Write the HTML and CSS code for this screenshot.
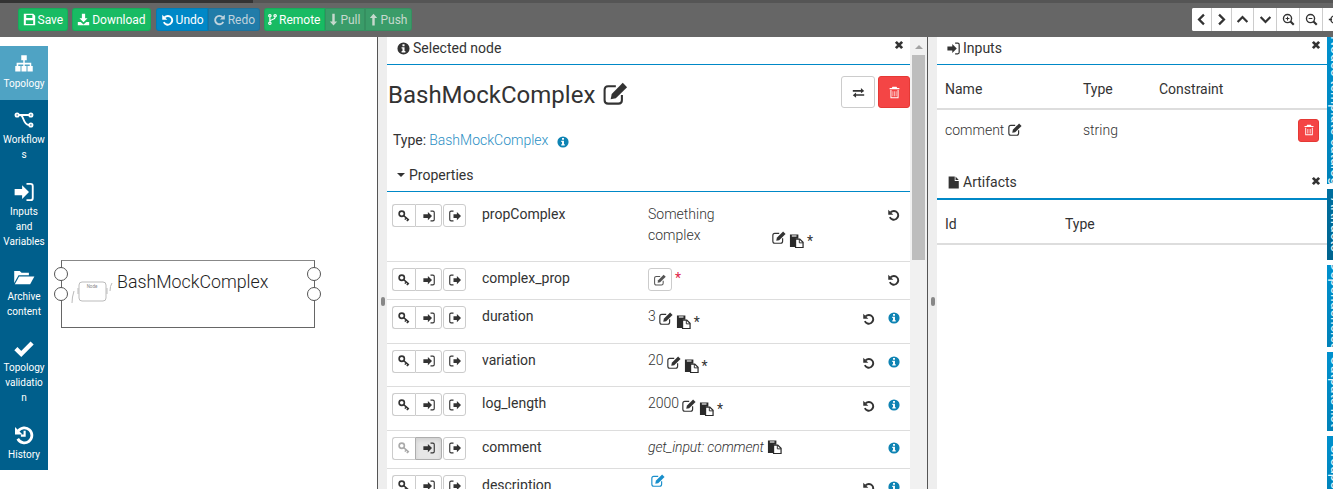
FILE: index.html
```html
<!DOCTYPE html>
<html lang="en">
<head>
  <meta charset="UTF-8">
  <title>Topology editor</title>
  <link rel="stylesheet" href="styles.css">
</head>
<body>
  <svg class="icon-defs" width="0" height="0">
    <defs>
      <symbol id="i-save" viewBox="0 0 16 16"><path fill-rule="evenodd" d="M1 1h11.5L15 3.5V15H1zM4 2.500V6h7.500V2.500zM3.500 9v4.500h9V9z"/></symbol>
      <symbol id="i-download" viewBox="0 0 16 16"><path d="M6 1h4v5.500h3l-5 5-5-5h3zM1 11h3.500L8 14l3.500-3H15v4H1z"/></symbol>
      <symbol id="i-undo" viewBox="0 0 15.500 15.500"><path d="M4.300 5.200A5.200 5.200 0 1 1 3.400 10.800" fill="none" stroke="currentColor" stroke-width="2.300"/><path d="M1.500 2v6h6z"/></symbol>
      <symbol id="i-redo" viewBox="0 0 16 16"><path d="M11.700 5.200A5.200 5.200 0 1 0 12.600 10.800" fill="none" stroke="currentColor" stroke-width="2.300"/><path d="M14.500 2v6h-6z"/></symbol>
      <symbol id="i-fork" viewBox="2 0 12 16"><g fill="none" stroke="currentColor" stroke-width="1.600"><circle cx="4.500" cy="3" r="1.600"/><circle cx="4.500" cy="13" r="1.600"/><circle cx="11.500" cy="3" r="1.600"/><path d="M4.500 5v6M11.500 5c0 4-7 2-7 6"/></g></symbol>
      <symbol id="i-down" viewBox="3 0 10 16"><path d="M6.500 1h3v9.500h3L8 15.500 3.500 10.500h3z"/></symbol>
      <symbol id="i-up" viewBox="3 0 10 16"><path d="M6.500 15.500h3V6h3L8 1 3.500 6h3z"/></symbol>
      <symbol id="i-left" viewBox="0 0 16 16"><path d="M11 2L5 8l6 6" fill="none" stroke="currentColor" stroke-width="2.800"/></symbol>
      <symbol id="i-right" viewBox="0 0 16 16"><path d="M5 2l6 6-6 6" fill="none" stroke="currentColor" stroke-width="2.800"/></symbol>
      <symbol id="i-chev-up" viewBox="0 0 16 16"><path d="M2 11l6-6 6 6" fill="none" stroke="currentColor" stroke-width="2.800"/></symbol>
      <symbol id="i-chev-down" viewBox="0 0 16 16"><path d="M2 5l6 6 6-6" fill="none" stroke="currentColor" stroke-width="2.800"/></symbol>
      <symbol id="i-zoom-in" viewBox="0 0 16 16"><g fill="none" stroke="currentColor"><circle cx="6.800" cy="6.800" r="5" stroke-width="1.700"/><path d="M10.500 10.500l4 4" stroke-width="2.600"/><path d="M4.500 6.800h4.600M6.800 4.500v4.600" stroke-width="1.300"/></g></symbol>
      <symbol id="i-zoom-out" viewBox="0 0 16 16"><g fill="none" stroke="currentColor"><circle cx="6.800" cy="6.800" r="5" stroke-width="1.700"/><path d="M10.500 10.500l4 4" stroke-width="2.600"/><path d="M4.500 6.800h4.600" stroke-width="1.300"/></g></symbol>
      <symbol id="i-target" viewBox="0 0 16 16"><g fill="none" stroke="currentColor"><circle cx="8" cy="8" r="4.500" stroke-width="1.600"/><path d="M8 1v4M8 11v4M1 8h4M11 8h4" stroke-width="1.600"/></g></symbol>
      <symbol id="i-sitemap" viewBox="0 0 16 16"><path d="M5.800 1h4.400v4H8.600v2h5.200v2.500H15V14h-4.200V9.500H12.600V8.300H8.600v1.200H10V14H6V9.500h1.400V8.300H3.400v1.200h1.800V14H1V9.500h1.100V7h5.300V5H5.800z"/></symbol>
      <symbol id="i-flow" viewBox="0 0 16 16"><g fill="none" stroke="currentColor" stroke-width="1.500"><circle cx="2.500" cy="4" r="1.300"/><circle cx="13.500" cy="4" r="1.300"/><circle cx="13.500" cy="12" r="1.300"/><path d="M4 4h8M5 4c3 0 2 8 7 8"/></g></symbol>
      <symbol id="i-signin" viewBox="0 0 16 16"><path d="M0.500 5.500h6V2.500L12 8l-5.500 5.500v-3h-6z"/><path d="M10 1.500h3.200q1.800 0 1.800 1.800v9.400q0 1.800-1.800 1.800H10" fill="none" stroke="currentColor" stroke-width="1.500"/></symbol>
      <symbol id="i-signout" viewBox="0 0 16 16"><path d="M6 5.500h4.500V2.500L16 8l-5.500 5.500v-3H6z"/><path d="M6 1.500H2.800Q1 1.500 1 3.300v9.400q0 1.800 1.800 1.800H6" fill="none" stroke="currentColor" stroke-width="1.500"/></symbol>
      <symbol id="i-folder" viewBox="0 0 18 16"><path d="M1 13V3h4.500l1.500 1.500h6V6.500H4.500z"/><path d="M5 7.500h12.500L14 14H1.500z"/></symbol>
      <symbol id="i-check" viewBox="0 0 16 16"><path d="M1.500 8.500l4.300 4.300L14.500 4" fill="none" stroke="currentColor" stroke-width="3.500"/></symbol>
      <symbol id="i-history" viewBox="0 0 16 16"><path d="M3.400 4.800A6 6 0 1 1 3 11" fill="none" stroke="currentColor" stroke-width="2.200"/><path d="M0.800 1.500v6h6z"/><path d="M8.500 4.500v4h-3" fill="none" stroke="currentColor" stroke-width="1.700"/></symbol>
      <symbol id="i-info" viewBox="0.500 0.500 15 15"><path fill-rule="evenodd" d="M8 1a7 7 0 1 1 0 14A7 7 0 0 1 8 1zM6.800 3v2.300h2.400V3zM5.800 6.500v1.400h1v3H5.800v1.600h4.400v-1.600h-1V6.500z"/></symbol>
      <symbol id="i-edit" viewBox="1.300 1.500 14 13.300"><path d="M12 9v3q0 2-2 2H4q-2 0-2-2V6q0-2 2-2h4.500" fill="none" stroke="currentColor" stroke-width="1.200"/><path d="M5.500 11.500l.6-3L12.500 2l2.500 2.500-6.500 6.400z"/></symbol>
      <symbol id="i-close" viewBox="0 0 16 16"><path d="M3 3l10 10M13 3L3 13" fill="none" stroke="currentColor" stroke-width="4.500"/></symbol>
      <symbol id="i-exchange" viewBox="0 0 16 16"><path d="M1 4.500h10V2l4 3.500-4 3V6.500H1zM15 9.500H5V7.500l-4 3.500 4 3v-2.500h10z" transform="translate(0 .5)"/></symbol>
      <symbol id="i-trash" viewBox="0 0 16 16"><path fill-rule="evenodd" d="M5.500 1h5l.8 1.500H14V4H2V2.500h2.700zM3 5h10v10H3zM4.200 5v8.800h7.600V5z"/><path opacity=".7" d="M5.500 6.500h1v6h-1zM7.500 6.500h1v6h-1zM9.500 6.500h1v6h-1z"/></symbol>
      <symbol id="i-key" viewBox="0 0 16 16"><g fill="none" stroke="currentColor"><circle cx="5" cy="5" r="3.500" stroke-width="2.200"/><path d="M7.500 7.500l7 6M11 10.500l-1.800 2.300M13.500 12.700l-1.700 2.100" stroke-width="2"/></g></symbol>
      <symbol id="i-paste" viewBox="0 0 16 16"><path d="M1 1.500h9V6H7v9H1z"/><path fill="#fff" stroke="currentColor" stroke-width="1.300" d="M7 6.500h4.500L15 10v5.500H7z"/><path d="M11 6.500V10.500h4" fill="none" stroke="currentColor" stroke-width="1"/><path d="M3 2.600h5v1.200H3z" fill="#fff"/></symbol>
      <symbol id="i-file" viewBox="1.500 0 13 16"><path d="M2 0.500h7.500v5.500h5v9.500H2zM10.500 0.500l4 4.500h-4z"/></symbol>
    </defs>
  </svg>

  <div class="top-strip"><span class="top-strip-dark"></span></div>
  <header class="topbar">
    <div class="tool-group">
      <button class="tool tool-green"><svg class="ic"><use href="#i-save"/></svg>Save</button>
    </div>
    <div class="tool-group">
      <button class="tool tool-green tool-wide"><svg class="ic"><use href="#i-download"/></svg>Download</button>
    </div>
    <div class="tool-group group-undo">
      <button class="tool tool-blue"><svg class="ic"><use href="#i-undo"/></svg>Undo</button>
      <button class="tool tool-blue tool-off"><svg class="ic"><use href="#i-redo"/></svg>Redo</button>
    </div>
    <div class="tool-group">
      <button class="tool tool-green"><svg class="ic ic-narrow"><use href="#i-fork"/></svg>Remote</button>
      <button class="tool tool-green tool-off"><svg class="ic ic-narrow"><use href="#i-down"/></svg>Pull</button>
      <button class="tool tool-green tool-off"><svg class="ic ic-narrow"><use href="#i-up"/></svg>Push</button>
    </div>
    <div class="view-tools">
      <button class="view-btn view-narrow"><svg class="ic"><use href="#i-left"/></svg></button>
      <button class="view-btn view-narrow"><svg class="ic"><use href="#i-right"/></svg></button>
      <button class="view-btn view-mid"><svg class="ic"><use href="#i-chev-up"/></svg></button>
      <button class="view-btn"><svg class="ic"><use href="#i-chev-down"/></svg></button>
      <button class="view-btn"><svg class="ic"><use href="#i-zoom-in"/></svg></button>
      <button class="view-btn"><svg class="ic"><use href="#i-zoom-out"/></svg></button>
      <button class="view-btn"><svg class="ic"><use href="#i-target"/></svg></button>
    </div>
  </header>

  <main class="workspace">
    <nav class="sidenav">
      <a class="nav-item active"><svg class="nav-ic"><use href="#i-sitemap"/></svg>Topology</a>
      <a class="nav-item"><svg class="nav-ic"><use href="#i-flow"/></svg>Workflows</a>
      <a class="nav-item"><svg class="nav-ic"><use href="#i-signin"/></svg>Inputs and Variables</a>
      <a class="nav-item"><svg class="nav-ic"><use href="#i-folder"/></svg>Archive content</a>
      <a class="nav-item"><svg class="nav-ic"><use href="#i-check"/></svg>Topology validation</a>
      <a class="nav-item"><svg class="nav-ic"><use href="#i-history"/></svg>History</a>
    </nav>

    <section class="canvas">
      <div class="node">
        <span class="port port-l1"></span>
        <span class="port port-l2"></span>
        <span class="port port-r1"></span>
        <span class="port port-r2"></span>
        <svg class="node-mark" viewBox="0 0 46 30">
          <g fill="none" stroke="#bbb">
            <rect x="9" y="3" width="27" height="19" rx="3"/>
            <path d="M8 9v6M4 12q-2 6-2 12M37 9v6M42 4q-2 3-2 8"/>
          </g>
          <text x="22" y="9" class="node-mark-text">Node</text>
        </svg>
        <span class="node-name">BashMockComplex</span>
      </div>
    </section>

    <div class="gutter"><span class="gutter-grip"></span></div>

    <section class="node-panel">
      <div class="panel-body">
        <div class="panel-head">
          <svg class="ic"><use href="#i-info"/></svg>Selected node
          <svg class="close"><use href="#i-close"/></svg>
        </div>
        <div class="title-row">
          <h3 class="node-title">BashMockComplex <svg class="title-edit"><use href="#i-edit"/></svg></h3>
          <div class="title-actions">
            <button class="btn-outline"><svg class="ic"><use href="#i-exchange"/></svg></button>
            <button class="btn-danger"><svg class="ic"><use href="#i-trash"/></svg></button>
          </div>
        </div>
        <div class="type-line">Type: <a class="type-link">BashMockComplex</a><svg class="info"><use href="#i-info"/></svg></div>
        <div class="props-head"><span class="caret"></span>Properties</div>

        <div class="prop-row row-first">
          <div class="prop-btns">
            <button class="pb pb-key"><svg><use href="#i-key"/></svg></button><button class="pb pb-in"><svg><use href="#i-signin"/></svg></button><button class="pb pb-out"><svg><use href="#i-signout"/></svg></button>
          </div>
          <div class="prop-name">propComplex</div>
          <div class="prop-value value-wrap">
            <span class="value-text">Something complex</span>
            <span class="value-tail"><svg class="edit"><use href="#i-edit"/></svg><svg class="paste"><use href="#i-paste"/></svg><span class="star">*</span></span>
          </div>
          <div class="prop-actions"><svg class="reset"><use href="#i-undo"/></svg></div>
        </div>

        <div class="prop-row row-short">
          <div class="prop-btns">
            <button class="pb pb-key"><svg><use href="#i-key"/></svg></button><button class="pb pb-in"><svg><use href="#i-signin"/></svg></button><button class="pb pb-out"><svg><use href="#i-signout"/></svg></button>
          </div>
          <div class="prop-name">complex_prop</div>
          <div class="prop-value"><button class="pb pb-edit"><svg><use href="#i-edit"/></svg></button><span class="star star-red">*</span></div>
          <div class="prop-actions"><svg class="reset"><use href="#i-undo"/></svg></div>
        </div>

        <div class="prop-row">
          <div class="prop-btns">
            <button class="pb pb-key"><svg><use href="#i-key"/></svg></button><button class="pb pb-in"><svg><use href="#i-signin"/></svg></button><button class="pb pb-out"><svg><use href="#i-signout"/></svg></button>
          </div>
          <div class="prop-name">duration</div>
          <div class="prop-value">3<svg class="edit"><use href="#i-edit"/></svg><svg class="paste"><use href="#i-paste"/></svg><span class="star">*</span></div>
          <div class="prop-actions"><svg class="reset"><use href="#i-undo"/></svg><svg class="info"><use href="#i-info"/></svg></div>
        </div>

        <div class="prop-row">
          <div class="prop-btns">
            <button class="pb pb-key"><svg><use href="#i-key"/></svg></button><button class="pb pb-in"><svg><use href="#i-signin"/></svg></button><button class="pb pb-out"><svg><use href="#i-signout"/></svg></button>
          </div>
          <div class="prop-name">variation</div>
          <div class="prop-value">20<svg class="edit"><use href="#i-edit"/></svg><svg class="paste"><use href="#i-paste"/></svg><span class="star">*</span></div>
          <div class="prop-actions"><svg class="reset"><use href="#i-undo"/></svg><svg class="info"><use href="#i-info"/></svg></div>
        </div>

        <div class="prop-row">
          <div class="prop-btns">
            <button class="pb pb-key"><svg><use href="#i-key"/></svg></button><button class="pb pb-in"><svg><use href="#i-signin"/></svg></button><button class="pb pb-out"><svg><use href="#i-signout"/></svg></button>
          </div>
          <div class="prop-name">log_length</div>
          <div class="prop-value">2000<svg class="edit"><use href="#i-edit"/></svg><svg class="paste"><use href="#i-paste"/></svg><span class="star">*</span></div>
          <div class="prop-actions"><svg class="reset"><use href="#i-undo"/></svg><svg class="info"><use href="#i-info"/></svg></div>
        </div>

        <div class="prop-row row-short">
          <div class="prop-btns">
            <button class="pb pb-key pb-muted"><svg><use href="#i-key"/></svg></button><button class="pb pb-in pb-on"><svg><use href="#i-signin"/></svg></button><button class="pb pb-out"><svg><use href="#i-signout"/></svg></button>
          </div>
          <div class="prop-name">comment</div>
          <div class="prop-value"><em class="value-input">get_input: comment</em><svg class="paste paste-up"><use href="#i-paste"/></svg></div>
          <div class="prop-actions"><svg class="info"><use href="#i-info"/></svg></div>
        </div>

        <div class="prop-row">
          <div class="prop-btns">
            <button class="pb pb-key"><svg><use href="#i-key"/></svg></button><button class="pb pb-in"><svg><use href="#i-signin"/></svg></button><button class="pb pb-out"><svg><use href="#i-signout"/></svg></button>
          </div>
          <div class="prop-name">description</div>
          <div class="prop-value"><svg class="edit edit-blue"><use href="#i-edit"/></svg></div>
          <div class="prop-actions"><svg class="reset"><use href="#i-undo"/></svg><svg class="info"><use href="#i-info"/></svg></div>
        </div>
      </div>
      <div class="scrollbar">
        <span class="scroll-arrow"></span>
        <span class="scroll-thumb"></span>
      </div>
    </section>

    <div class="gutter"><span class="gutter-grip"></span></div>

    <section class="side-panel">
      <div class="panel-head">
        <svg class="ic"><use href="#i-signin"/></svg>Inputs
        <svg class="close"><use href="#i-close"/></svg>
      </div>
      <div class="table-head inputs-cols">
        <span>Name</span><span>Type</span><span>Constraint</span>
      </div>
      <div class="inputs-row inputs-cols">
        <span class="light">comment <svg class="edit"><use href="#i-edit"/></svg></span>
        <span class="light">string</span>
        <span></span>
        <button class="btn-danger btn-small"><svg class="ic"><use href="#i-trash"/></svg></button>
      </div>
      <div class="panel-head head-artifacts">
        <svg class="ic"><use href="#i-file"/></svg>Artifacts
        <svg class="close"><use href="#i-close"/></svg>
      </div>
      <div class="table-head artifact-cols">
        <span>Id</span><span>Type</span>
      </div>
    </section>

    <aside class="side-tabs">
      <div class="side-tab tab-1"><span>Nodes template catalog</span></div>
      <div class="side-tab tab-2"><span>Artifacts</span></div>
      <div class="side-tab tab-3"><span>Dependencies</span></div>
      <div class="side-tab tab-4"><span>Outputs list</span></div>
      <div class="side-tab tab-5"><span>Groups</span></div>
    </aside>
  </main>
</body>
</html>
```

FILE: styles.css
```css
* {
  box-sizing: border-box;
}

html, body {
  height: 489px;
  margin: 0;
  overflow: hidden;
}

body {
  font-family: Roboto, "Liberation Sans", sans-serif;
  font-size: 14px;
  line-height: 21px;
  color: #333;
  background-color: #fff;
}

button {
  font-family: inherit;
  cursor: pointer;
}

svg {
  fill: currentColor;
}

.icon-defs {
  position: absolute;
}

.ic {
  width: 13px;
  height: 13px;
  flex: none;
}

.ic-narrow {
  width: 9px;
}

/* top bar */
.top-strip {
  height: 3px;
  background-color: #555;
}

.top-strip-dark {
  display: block;
  width: 253px;
  height: 3px;
  background-color: #333;
}

.topbar {
  display: flex;
  align-items: flex-start;
  height: 34px;
  padding: 5px 0 0 18px;
  background-color: #666;
  gap: 4px;
}

.tool-group {
  display: flex;
  height: 23px;
}

.group-undo {
  margin-left: 1px;
}

.tool {
  display: flex;
  align-items: center;
  gap: 2px;
  height: 23px;
  padding: 0 3.500px;
  border: 1px solid rgba(0, 0, 0, 0.08);
  border-radius: 3px;
  color: #fff;
  font-size: 12px;
}

.tool-wide {
  padding: 0 4.500px;
}

.tool-group .tool + .tool {
  border-top-left-radius: 0;
  border-bottom-left-radius: 0;
}

.tool-group .tool:not(:last-child) {
  border-top-right-radius: 0;
  border-bottom-right-radius: 0;
}

.tool-green {
  background-color: #18bb63;
}

.tool-blue {
  background-color: #0088c7;
}

.tool-green.tool-off {
  background-color: #3a9c69;
  color: #c6d9ce;
}

.tool-blue.tool-off {
  background-color: #217ca9;
  color: #c0d3dd;
}

.view-tools {
  display: flex;
  flex: none;
  width: 141px;
  height: 23px;
  margin-left: auto;
  background-color: #fff;
  border-radius: 2px 0 0 2px;
  overflow: hidden;
}

.view-btn {
  display: flex;
  align-items: center;
  justify-content: center;
  flex: none;
  width: 23px;
  height: 23px;
  padding: 0;
  border: 0;
  border-right: 1px solid #ccc;
  background-color: #fff;
  color: #333;
}

.view-narrow {
  width: 20px;
}

.view-mid {
  width: 22px;
}

/* main row */
.workspace {
  display: flex;
  height: 452px;
}

.sidenav {
  flex: none;
  width: 48px;
  height: 424px;
  margin-top: 9px;
  background-color: #005f8c;
}

.nav-item {
  display: flex;
  flex-direction: column;
  align-items: center;
  height: 72px;
  padding: 10px 2px 0;
  color: #fff;
  font-size: 10px;
  line-height: 15px;
  text-align: center;
  overflow-wrap: anywhere;
}

.nav-item:nth-child(1) {
  height: 54px;
  padding-top: 8px;
  background-color: #4fa3c4;
}

.nav-item:nth-child(3) {
  height: 85px;
}

.nav-item:nth-child(4) {
  height: 71px;
}

.nav-item:nth-child(5) {
  height: 87px;
  padding: 10px 3.500px 0;
}

.nav-item:nth-child(6) {
  height: 55px;
}

.nav-ic {
  width: 22px;
  height: 20px;
  flex: none;
  margin-bottom: 2px;
}

.canvas {
  position: relative;
  flex: none;
  width: 329px;
}

.node {
  position: absolute;
  left: 13px;
  top: 223px;
  width: 254px;
  height: 68px;
  border: 1px solid #666;
  border-top-color: #888;
}

.port {
  position: absolute;
  width: 14px;
  height: 14px;
  border: 1px solid #555;
  border-radius: 50%;
  background-color: #fff;
}

.port-l1, .port-r1 {
  top: 6px;
}

.port-l2, .port-r2 {
  top: 26px;
}

.port-l1, .port-l2 {
  left: -8px;
}

.port-r1, .port-r2 {
  right: -7px;
}

.node-mark {
  position: absolute;
  left: 8px;
  top: 18px;
  width: 46px;
  height: 30px;
  fill: none;
}

.node-mark-text {
  font-size: 4.500px;
  fill: #888;
  text-anchor: middle;
}

.node-name {
  position: absolute;
  left: 55px;
  top: 8px;
  font-size: 17.800px;
  line-height: 26px;
  font-weight: 300;
  color: #222;
}

.gutter {
  display: flex;
  flex: none;
  align-items: center;
  justify-content: center;
  width: 10px;
  padding-top: 76px;
  background-color: #eee;
  border-left: 1px solid #555;
}

.gutter-grip {
  width: 4px;
  height: 9px;
  background-color: #888;
  border-radius: 2px;
}

/* node panel */
.node-panel {
  display: flex;
  flex: none;
  width: 540px;
  height: 452px;
  overflow: hidden;
}

.panel-body {
  flex: none;
  width: 523px;
  overflow: hidden;
}

.panel-head {
  position: relative;
  display: flex;
  align-items: center;
  gap: 3px;
  height: 28px;
  padding: 0 10px 4px;
  border-bottom: 1px solid #0088c7;
}

.close {
  position: absolute;
  right: 6px;
  top: 3px;
  width: 10px;
  height: 10px;
  color: #333;
}

.title-row {
  display: flex;
  justify-content: space-between;
  align-items: flex-start;
  height: 65px;
  padding: 11px 0 0 1px;
}

.node-title {
  margin: 6px 0 0;
  font-size: 24px;
  line-height: 26px;
  font-weight: 400;
}

.title-edit {
  width: 25px;
  height: 23px;
  margin-left: 2px;
  vertical-align: -2px;
}

.title-actions {
  display: flex;
  gap: 3px;
}

.btn-outline, .btn-danger {
  display: flex;
  align-items: center;
  justify-content: center;
  width: 34px;
  height: 32px;
  padding: 0;
  border-radius: 3px;
}

.btn-outline {
  border: 1px solid #ccc;
  background-color: #fff;
  color: #333;
}

.btn-danger {
  width: 32px;
  border: 1px solid #e53935;
  background-color: #f44545;
  color: #fff;
}

.btn-small {
  width: 21px;
  height: 23px;
  margin-left: auto;
}

.btn-small .ic {
  width: 12px;
  height: 12px;
}

.type-line {
  display: flex;
  align-items: center;
  height: 21px;
  padding-left: 6px;
}

.type-link {
  color: #2a8fc4;
  margin-left: 3px;
  font-weight: 300;
}

.type-line .info {
  margin-left: 9px;
  margin-top: 3px;
}

.info {
  width: 12px;
  height: 12px;
  color: #0e83b3;
  flex: none;
}

.props-head {
  display: flex;
  align-items: center;
  height: 39px;
  margin-top: 2px;
  padding: 6px 0 0 10px;
  border-bottom: 1px solid #0088c7;
}

.caret {
  width: 0;
  height: 0;
  margin-right: 4px;
  border-left: 4px solid transparent;
  border-right: 4px solid transparent;
  border-top: 4px solid #333;
}

.prop-row {
  display: grid;
  grid-template-columns: 90px 166px 1fr 45px;
  align-items: start;
  height: 43.500px;
  padding: 6px 10px 0 5px;
  border-bottom: 1px solid #ddd;
}

.row-first {
  height: 70px;
  padding-top: 12px;
}

.row-short {
  height: 38px;
}

.prop-btns {
  display: flex;
}

.pb {
  display: flex;
  align-items: center;
  justify-content: center;
  width: 23px;
  height: 23px;
  padding: 0;
  border: 1px solid #ccc;
  background-color: #fff;
  color: #333;
  border-radius: 3px;
}

.pb svg {
  width: 12px;
  height: 12px;
}

.pb-key {
  border-right: 0;
  border-radius: 3px 0 0 3px;
}

.pb-in {
  width: 27px;
  border-radius: 0 3px 3px 0;
}

.pb-out {
  margin-left: 1px;
}

.pb-muted {
  color: #aaa;
}

.pb-on {
  background-color: #e6e6e6;
  border-color: #adadad;
  box-shadow: inset 0 2px 4px rgba(0, 0, 0, 0.1);
}

.pb-edit {
  width: 24px;
  color: #555;
}

.prop-name {
  line-height: 20px;
}

.prop-value {
  display: flex;
  align-items: flex-start;
  font-weight: 300;
  line-height: 21px;
}

.value-input {
  letter-spacing: -0.150px;
}

.value-wrap {
  display: grid;
  grid-template-columns: 124px auto;
}

.value-text {
  width: 90px;
}

.value-tail {
  display: flex;
  align-self: end;
  margin-bottom: -6px;
}

.value-tail .edit {
  margin-left: 0;
}

.edit {
  width: 14px;
  height: 13px;
  margin: 6px 3px 0;
  flex: none;
  color: #333;
}

.edit-blue {
  color: #1a8fcb;
  margin-top: -1px;
}

.paste {
  width: 15px;
  height: 15px;
  margin-top: 8px;
  flex: none;
  color: #2a2a2a;
}

.paste-up {
  margin-top: 2px;
  margin-left: 3px;
}

.star {
  margin-left: 3px;
  margin-top: 6px;
  font-weight: 400;
}

.star-red {
  color: #e0274a;
  margin-top: 0;
}

.prop-actions {
  display: flex;
  justify-content: flex-end;
  gap: 13px;
  margin-top: 6px;
  grid-column: 4;
}

.row-first .prop-actions {
  margin-top: 4px;
}

.row-short .prop-actions {
  margin-top: 5px;
}

.reset {
  width: 13px;
  height: 13px;
  flex: none;
}

.scrollbar {
  display: flex;
  flex-direction: column;
  flex: none;
  width: 17px;
  background-color: #f1f1f1;
}

.scroll-arrow {
  width: 0;
  height: 0;
  margin: 8px auto 6px;
  border-left: 4px solid transparent;
  border-right: 4px solid transparent;
  border-bottom: 4px solid #a3a3a3;
}

.scroll-thumb {
  width: 13px;
  height: 205px;
  margin-left: 2px;
  background-color: #bdbdbd;
}

/* right panel */
.side-panel {
  flex: none;
  width: 390px;
  height: 452px;
}

.table-head {
  display: grid;
  align-items: center;
  height: 45px;
  padding: 5px 8px 0;
  border-bottom: 2px solid #ddd;
}

.inputs-cols {
  grid-template-columns: 138px 76px 1fr auto;
}

.artifact-cols {
  grid-template-columns: 120px 1fr;
}

.inputs-row {
  display: grid;
  align-items: center;
  height: 54px;
  padding: 0 8px 14px;
}

.light {
  font-weight: 300;
}

.inputs-row .edit {
  vertical-align: -1px;
  margin: 0;
}

.head-artifacts {
  height: 36px;
  padding: 2px 10px 0;
  border-bottom-width: 2px;
}

.head-artifacts .close {
  top: 12px;
}

.side-tabs {
  display: flex;
  flex: none;
  flex-direction: column;
  gap: 5px;
  width: 6px;
  overflow: hidden;
}

.side-tab {
  flex: none;
  display: flex;
  justify-content: center;
  overflow: hidden;
  background-color: #0090cd;
  background-image: linear-gradient(to bottom, rgba(0, 0, 0, 0), rgba(0, 0, 0, 0.1));
  color: #e8f6fb;
  font-size: 14px;
  line-height: 11px;
  writing-mode: vertical-rl;
  white-space: nowrap;
}

.side-tab span {
  display: block;
  margin-right: -8px;
}

.tab-1 {
  height: 147px;
}

.tab-2 {
  height: 71px;
  background-color: #006f9f;
}

.tab-3 {
  height: 82px;
}

.tab-4 {
  height: 79px;
}

.tab-5 {
  height: 60px;
}
```
